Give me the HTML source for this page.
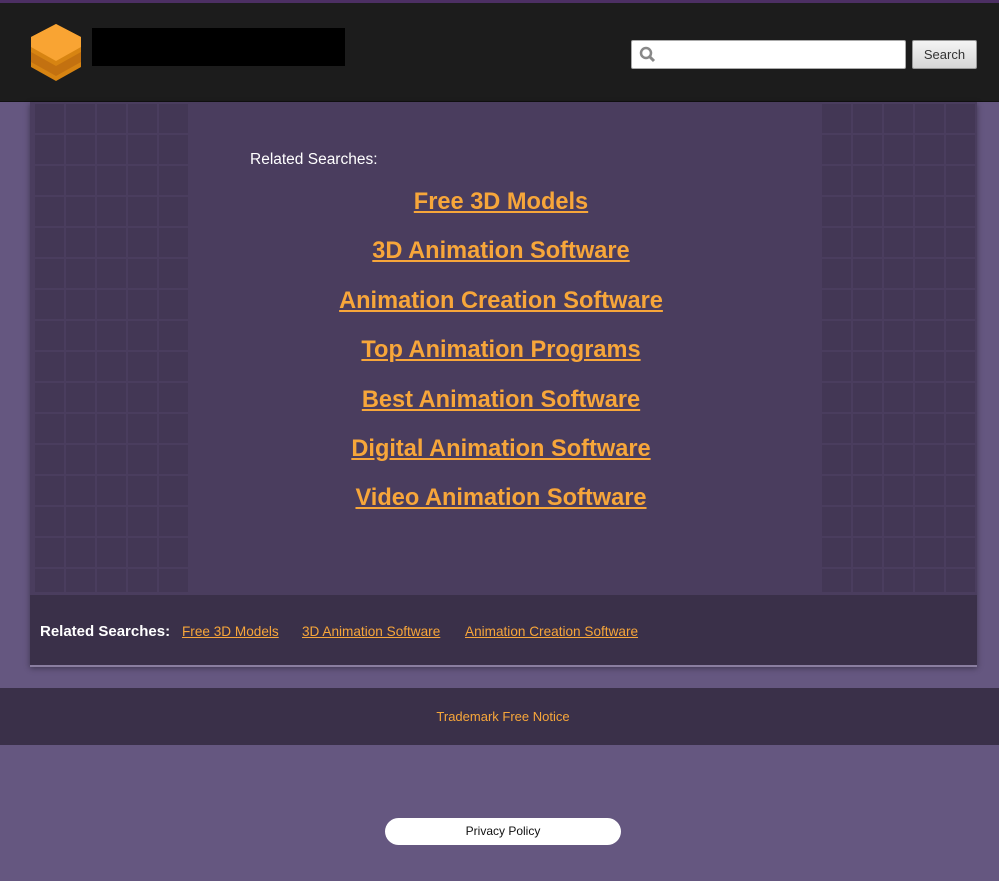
<!DOCTYPE html>
<html><head><style>
body{margin:0;width:999px;height:881px;background:#655780;font-family:"Liberation Sans",sans-serif;position:relative;overflow:hidden}
.top{position:absolute;left:0;top:0;width:999px;height:3px;background:#4c2f63}
.hdr{position:absolute;left:0;top:3px;width:999px;height:98px;background:#1c1c1c;border-bottom:1px solid #111}
.blk{position:absolute;left:92px;top:25px;width:253px;height:38px;background:#000}
.inp{position:absolute;left:631px;top:37px;width:273px;height:27px;background:#fff;border:1px solid #aaa;border-radius:2px}
.btn{position:absolute;left:912px;top:37px;width:63px;height:27px;background:linear-gradient(#f4f4f4,#d6d6d6);border:1px solid #999;border-radius:2px;font-size:13px;color:#333;text-align:center;line-height:27px}
.main{position:absolute;left:30px;top:102px;width:947px;height:564px;background:#4a3d5e;box-shadow:0 2px 6px rgba(0,0,0,.4)}
.grid{position:absolute;top:0;height:490px;background-image:linear-gradient(#4a3d5e 2px,transparent 2px),linear-gradient(90deg,#4a3d5e 2px,transparent 2px);background-size:31px 31px;background-color:#433755}
.rel{position:absolute;left:250px;top:151px;color:#fff;font-size:15.5px}
.links{position:absolute;left:0;top:187px;width:1002px;text-align:center}
.links a{display:block;color:#f7a63a;font-weight:bold;font-size:23.6px;text-decoration:underline;height:49.4px;line-height:30px}
.bar{position:absolute;left:30px;top:595px;width:947px;height:70px;background:#3a3049;border-bottom:2px solid #8a7ea0}
.bar b{position:absolute;left:10px;top:28px;color:#fff;font-size:15px}
.bar a{position:absolute;top:29px;color:#f7a63a;font-size:13.6px;text-decoration:underline}
.foot{position:absolute;left:0;top:688px;width:1006px;height:57px;background:#3a3049;text-align:center;line-height:57px;color:#f7a63a;font-size:13px}
.pp{position:absolute;left:385px;top:818px;width:236px;height:27px;background:#fff;border-radius:14px;text-align:center;line-height:27px;font-size:12px;color:#111}
</style></head><body>
<div class="top"></div>
<div class="hdr">
<svg style="position:absolute;left:29px;top:19px" width="55" height="62" viewBox="0 0 55 62">
<path d="M27 2 L52 15 L52 45 L27 59 L2 45 L2 15 Z" fill="#d78412"/>
<path d="M2 30 L27 44 L52 30 L52 40 L27 54 L2 40Z" fill="#c37110"/>
<path d="M27 2 L52 15 L52 25 L27 39 L2 25 L2 15Z" fill="#f9a433"/>
</svg>
<div class="blk"></div>
<div class="inp"><svg style="position:absolute;left:7px;top:5px" width="18" height="18" viewBox="0 0 18 18"><circle cx="7" cy="7" r="5" stroke="#888" stroke-width="2.5" fill="none"/><path d="M10.5 10.5 L15 15" stroke="#888" stroke-width="3"/></svg></div>
<div class="btn">Search</div>
</div>
<div class="main">
<div class="grid" style="left:3px;width:155px"></div>
<div class="grid" style="left:790px;width:155px"></div>
</div>
<div class="rel">Related Searches:</div>
<div class="links">
<a>Free 3D Models</a><a>3D Animation Software</a><a>Animation Creation Software</a><a>Top Animation Programs</a><a>Best Animation Software</a><a>Digital Animation Software</a><a>Video Animation Software</a>
</div>
<div class="bar"><b>Related Searches:</b><a style="left:152px">Free 3D Models</a><a style="left:272px">3D Animation Software</a><a style="left:435px">Animation Creation Software</a></div>
<div class="foot">Trademark Free Notice</div>
<div class="pp">Privacy Policy</div>
</body></html>
